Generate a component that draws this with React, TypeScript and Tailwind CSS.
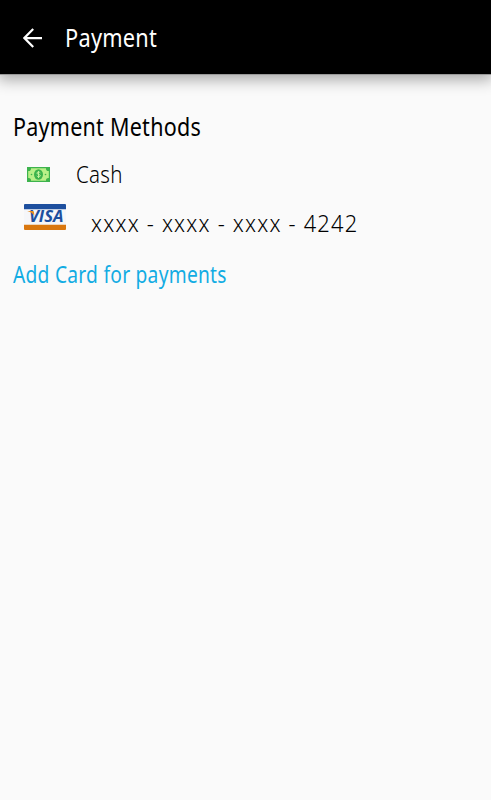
import React from "react";

interface PaymentMethod {
  id: string;
  label: string;
  icon: React.ReactNode;
  rowClass: string;
  labelClass: string;
}

const BackArrow: React.FC = () => (
  <svg width="20" height="20" viewBox="0 0 20 20" fill="none">
    <path
      d="M10.2 0.9 1.4 10l8.8 9.1M1.4 10.1H19"
      stroke="#fff"
      strokeWidth="2.2"
    />
  </svg>
);

const CashIcon: React.FC = () => (
  <svg width="23" height="15" viewBox="0 0 23 15">
    <rect width="23" height="15" fill="#3db34d" />
    <path
      d="M4 1.3h15a2.6 2.6 0 0 0 2.8 2.8v6.8a2.6 2.6 0 0 0-2.8 2.8H4a2.6 2.6 0 0 0-2.8-2.8V4.1A2.6 2.6 0 0 0 4 1.3Z"
      fill="#b9f088"
    />
    <ellipse cx="11.5" cy="7.5" rx="4.5" ry="5.2" fill="#3db34d" />
    <circle cx="4.5" cy="7.5" r="0.8" fill="#3db34d" />
    <circle cx="18.5" cy="7.5" r="0.8" fill="#3db34d" />
    <path
      d="M13.3 5.8c-.5-.9-3.4-1.1-3.4.3 0 1.6 3.4 1 3.4 2.6 0 1.5-3 1.3-3.5.2M11.5 4v7"
      fill="none"
      stroke="#c3f29a"
      strokeWidth="1"
    />
  </svg>
);

const VisaIcon: React.FC = () => (
  <svg width="42" height="26" viewBox="0 0 42 26">
    <rect y="1" width="42" height="24" rx="1" fill="#f5f6f9" />
    <path d="M1 0h40a1 1 0 0 1 1 1v4.2H0V1a1 1 0 0 1 1-1Z" fill="#1d4f9e" />
    <path d="M0 20.7h42V25a1 1 0 0 1-1 1H1a1 1 0 0 1-1-1Z" fill="#d9770f" />
    <text
      x="5"
      y="18.3"
      textLength="34.5"
      lengthAdjust="spacingAndGlyphs"
      fontFamily="'Open Sans', sans-serif"
      fontSize="15.5"
      fontWeight="700"
      fontStyle="italic"
      fill="#1d4f9e"
    >
      VISA
    </text>
    <path d="M3.2 7h5c1.1 0 1.7.4 1.8 1.4l.3 3C8.600 9.400 6.400 8 3.200 7Z" fill="#e58a1c" />
  </svg>
);

const methods: PaymentMethod[] = [
  {
    id: "cash",
    label: "Cash",
    icon: <CashIcon />,
    rowClass: "mt-[17px] h-[30px] pl-[27px]",
    labelClass: "ml-[26px] scale-x-[0.89] tracking-[0.3px]",
  },
  {
    id: "visa",
    label: "xxxx - xxxx - xxxx - 4242",
    icon: <VisaIcon />,
    rowClass: "mt-[13px] h-[30px] pl-6",
    labelClass: "ml-[25px] mt-[11px] scale-x-[0.95] tracking-[1.27px]",
  },
];

const App: React.FC = () => {
  return (
    <div className="min-h-screen overflow-hidden bg-[#fafafa] font-['Noto_Sans',sans-serif]">
      <header className="flex h-[74px] items-center bg-black pl-[23px] text-white shadow-[0_1px_0_#999,0_4px_14px_2px_rgba(0,0,0,0.32)]">
        <button aria-label="Back" className="mt-px">
          <BackArrow />
        </button>
        <h1 className="ml-[22px] origin-left scale-x-[0.87] text-[25px] leading-8 tracking-[0.3px]">
          Payment
        </h1>
      </header>

      <main className="pt-9">
        <h2 className="ml-[13px] w-max origin-left scale-x-[0.86] text-[25px] leading-8 tracking-[0.3px] text-black">
          Payment Methods
        </h2>

        {methods.map((method) => (
          <div key={method.id} className={`flex items-center ${method.rowClass}`}>
            {method.icon}
            <span
              className={`origin-left whitespace-nowrap text-[23px] font-light leading-[30px] text-black ${method.labelClass}`}
            >
              {method.label}
            </span>
          </div>
        ))}

        <button className="ml-[13px] mt-[27px] block origin-left scale-x-[0.835] whitespace-nowrap text-[23px] leading-[30px] tracking-[0.3px] text-[#12ace3]">
          Add Card for payments
        </button>
      </main>
    </div>
  );
};

export default App;
